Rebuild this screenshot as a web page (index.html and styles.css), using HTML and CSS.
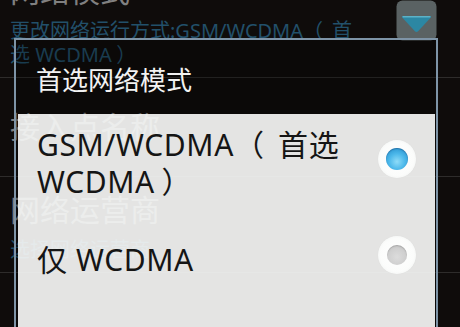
FILE: index.html
```html
<!DOCTYPE html>
<html lang="zh-CN">
<head>
<meta charset="utf-8">
<title>首选网络模式</title>
<link rel="stylesheet" href="styles.css">
</head>
<body>
<ul class="prefs">
  <li class="pref">
    <div class="pref-text">
      <div class="pref-title">网络模式</div>
      <div class="pref-summary">更改网络运行方式:GSM/WCDMA<span class="paren-open">（</span>首<br>选 WCDMA<span class="paren-close">）</span></div>
    </div>
    <svg class="dropdown" viewBox="0 0 41 41" aria-hidden="true">
      <rect x="0.5" y="0.5" width="40" height="40" rx="6" fill="#5a6263"/>
      <path d="M6.2 17.6 Q5.2 16 7.2 16 H33.8 Q35.8 16 34.8 17.6 L22.3 31 Q20.5 32.8 18.7 31 Z" fill="#2c87a3"/>
      <path d="M7.2 16.8 H33.8" stroke="#5cb2c8" stroke-width="1.6" stroke-linecap="round"/>
    </svg>
  </li>
  <li class="pref pref-single">
    <div class="pref-title">接入点名称</div>
  </li>
  <li class="pref">
    <div class="pref-text">
      <div class="pref-title">网络运营商</div>
      <div class="pref-summary">选择网络运营商</div>
    </div>
  </li>
</ul>

<div class="dialog">
  <div class="dialog-title">首选网络模式</div>
  <div class="dialog-body">
    <div class="option">
      <span class="option-label">GSM/WCDMA<span class="paren-open">（</span>首选 WCDMA<span class="paren-close">）</span></span>
      <span class="radio radio-on"><span class="radio-dot"></span></span>
    </div>
    <div class="option">
      <span class="option-label">仅 WCDMA</span>
      <span class="radio"><span class="radio-dot"></span></span>
    </div>
  </div>
</div>
</body>
</html>
```

FILE: styles.css
```css
html, body {
  margin: 0;
  padding: 0;
}

body {
  position: relative;
  width: 460px;
  height: 327px;
  overflow: hidden;
  background: #0f0c0b;
  font-family: "Noto Sans", "Noto Sans CJK SC", sans-serif;
}

/* the device font draws full-width parentheses centred, with room on the inner side */
.paren-open {
  margin-right: 0.45em;
}

.paren-close {
  margin-left: 0.22em;
}

/* background preference list (dimmed) */
.prefs {
  list-style: none;
  margin: -42px 0 0;
  padding: 0;
}

.pref {
  display: flex;
  align-items: center;
  padding: 16px 23px 10px 10px;
  border-bottom: 1px solid #2e2c2b;
}

.pref-text {
  flex: 1;
}

.pref-title {
  font-size: 30px;
  line-height: 34px;
  color: #808080;
  white-space: nowrap;
}

.pref-summary {
  margin-top: 11px;
  font-size: 20px;
  line-height: 24px;
  color: #22506a;
  white-space: nowrap;
}

.pref-single {
  padding-top: 32px;
  padding-bottom: 32px;
}

.dropdown {
  flex: none;
  width: 41px;
  height: 41px;
}

/* dialog */
.dialog {
  position: absolute;
  left: 14px;
  top: 38px;
  width: 424px;
  height: 300px;
  box-sizing: border-box;
  border: 2px solid #7e94a7;
  background: rgba(0, 0, 0, 0.25);
}

.dialog-title {
  height: 68px;
  padding: 6px 0 0 20px;
  line-height: 68px;
  font-size: 26px;
  color: #f2f2f2;
}

.dialog-body {
  margin: 0 1px 0 2px;
  height: 240px;
  background: rgba(252, 253, 252, 0.9);
}

.option {
  display: flex;
  align-items: center;
  padding: 12px 19px 21px 19px;
}

.option + .option {
  padding-top: 15px;
}

.option-label {
  flex: 1;
  font-size: 30px;
  line-height: 37px;
  letter-spacing: 0.6px;
  color: #151515;
}

.radio {
  flex: none;
  width: 38px;
  height: 38px;
  margin-bottom: 9px;
  border-radius: 50%;
  display: flex;
  align-items: center;
  justify-content: center;
  background: radial-gradient(circle at 50% 50%, #ffffff 0%, #fbfcfb 62%, #eef0ef 88%, #e6e8e7 100%);
  box-shadow: 0 0 1px rgba(0, 0, 0, 0.08);
}

.radio-dot {
  width: 20px;
  height: 20px;
  border-radius: 50%;
  background: radial-gradient(circle at 50% 60%, #dcdcdc 0%, #cfcfcf 55%, #b4b4b4 100%);
  box-shadow: inset 0 1px 1px rgba(0, 0, 0, 0.15);
}

.radio-on .radio-dot {
  width: 22px;
  height: 22px;
  background: radial-gradient(circle at 50% 62%, #8fdcf8 0%, #4cb8ea 45%, #2a94d0 85%, #1f78b3 100%);
  box-shadow: inset 0 1px 1px rgba(0, 40, 90, 0.35);
}
```
